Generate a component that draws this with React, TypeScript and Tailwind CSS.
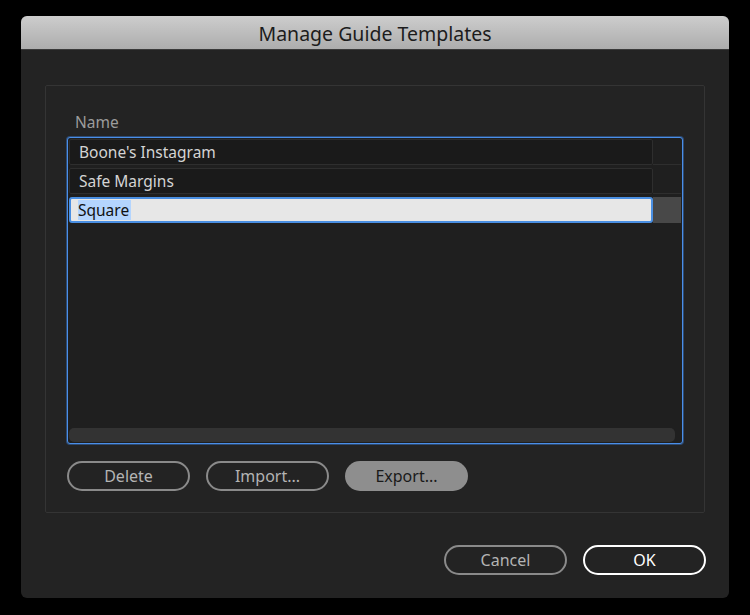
import React from 'react';

const font = { fontFamily: '"Noto Sans", "Open Sans", Arial, sans-serif' };

type Row = { name: string; selected?: boolean };

const rows: Row[] = [
  { name: "Boone's Instagram" },
  { name: 'Safe Margins' },
  { name: 'Square', selected: true },
];

function OutlineButton({ label, filled, strong }: { label: string; filled?: boolean; strong?: boolean }) {
  if (filled) {
    return (
      <button className="w-[123px] h-[30px] rounded-full bg-[#8e8e8e] text-[color:#1a1a1a] text-[16px] flex items-center justify-center">
        <span className="text-[color:#1a1a1a]">{label}</span>
      </button>
    );
  }
  return (
    <button
      className={
        strong
          ? 'w-[123px] h-[30px] rounded-full border-2 border-white text-white text-[16px] flex items-center justify-center'
          : 'w-[123px] h-[30px] rounded-full border-2 border-[#8a8a8a] text-[#b4b4b4] text-[16px] flex items-center justify-center'
      }
    >
      {label}
    </button>
  );
}

export default function App() {
  return (
    <div className="w-[750px] h-[615px] bg-black overflow-hidden pt-[16px] pl-[21px]" style={font}>
      <div className="w-[708px] h-[582px] rounded-[6px] overflow-hidden bg-[#232323] flex flex-col">
        {/* Title bar */}
        <div className="h-[34px] shrink-0 bg-gradient-to-b from-[#cdcdcd] to-[#adadad] border-b border-[#3a3a3a] flex items-center justify-center">
          <span className="text-[19.5px] text-[#1c1c1c] leading-none mt-[2px]">Manage Guide Templates</span>
        </div>

        {/* Group box */}
        <div className="mt-[35px] mx-[24px] h-[428px] border border-[#343434] rounded-[2px] flex flex-col pl-[21px] pr-[21px]">
          <div className="mt-[26px] h-[20px] pl-[8px] text-[15.5px] leading-[20px] text-[#9c9c9c]">Name</div>

          {/* List */}
          <div className="mt-[5px] h-[307px] border border-[#4a8ee8] shadow-[0_0_0_1px_rgba(60,125,210,0.45)] rounded-[3px] bg-[#1f1f1f] flex flex-col p-[1px]">
            {rows.map((r) => (
              <div key={r.name} className="flex h-[26px] mb-[3px]">
                {r.selected ? (
                  <div className="flex-1 bg-[#e7e7e7] border-2 border-[#4a8fe2] rounded-[3px] flex items-center pl-[7px]">
                    <span className="bg-[#b4d5fe] text-[#111] text-[15.5px] leading-[20px] pr-[2px]">{r.name}</span>
                  </div>
                ) : (
                  <div className="flex-1 bg-[#1a1a1a] border border-[#2e2e2e] rounded-[2px] flex items-center pl-[9px]">
                    <span className="text-[#d4d4d4] text-[15.5px] leading-[20px]">{r.name}</span>
                  </div>
                )}
                <div
                  className={
                    r.selected
                      ? 'w-[28px] bg-[#484848]'
                      : 'w-[28px] border-b border-[#2e2e2e]'
                  }
                />
              </div>
            ))}
            <div className="flex-1" />
            <div className="h-[14px] mr-[6px] bg-[#333333] rounded-[5px]" />
          </div>

          {/* List buttons */}
          <div className="mt-[17px] flex gap-[16px]">
            <OutlineButton label="Delete" />
            <OutlineButton label="Import..." />
            <OutlineButton label="Export..." filled />
          </div>
        </div>

        {/* Dialog buttons */}
        <div className="mt-[32px] flex justify-end gap-[16px] pr-[23px]">
          <OutlineButton label="Cancel" />
          <OutlineButton label="OK" strong />
        </div>
      </div>
    </div>
  );
}
